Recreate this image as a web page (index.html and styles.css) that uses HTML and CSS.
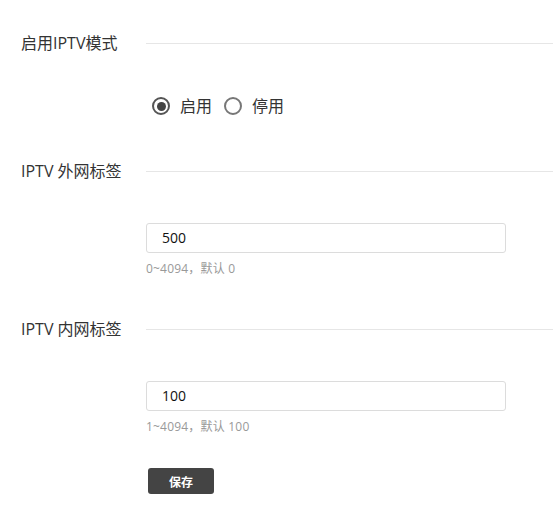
FILE: index.html
```html
<!DOCTYPE html>
<html lang="zh-CN">
<head>
<meta charset="utf-8">
<link rel="stylesheet" href="styles.css">
</head>
<body>
<div class="page">
  <section class="sec sec-first">
    <div class="head"><span class="title">启用IPTV模式</span><span class="rule"></span></div>
    <div class="body radios">
      <label class="radio"><span class="dot on"></span><span>启用</span></label>
      <label class="radio"><span class="dot"></span><span>停用</span></label>
    </div>
  </section>
  <section class="sec">
    <div class="head"><span class="title">IPTV 外网标签</span><span class="rule"></span></div>
    <div class="body field">
      <div class="input">500</div>
      <div class="hint">0~4094，默认 0</div>
    </div>
  </section>
  <section class="sec">
    <div class="head"><span class="title">IPTV 内网标签</span><span class="rule"></span></div>
    <div class="body field">
      <div class="input">100</div>
      <div class="hint">1~4094，默认 100</div>
      <button class="save">保存</button>
    </div>
  </section>
</div>
</body>
</html>
```
FILE: styles.css
```css
html, body { margin: 0; padding: 0; background: #fff; }
body {
  font-family: "Open Sans", "Noto Sans CJK SC", sans-serif;
  color: #333;
}
.page {
  padding-top: 32px;
  display: flex;
  flex-direction: column;
}
.sec { margin-top: 40px; }
.sec-first { margin-top: 0; padding-bottom: 3px; }
.head {
  display: flex;
  align-items: center;
  height: 22px;
  padding-left: 21px;
}
.title {
  width: 125px;
  flex: none;
  font-size: 16px;
  line-height: 22px;
  color: #333;
  white-space: nowrap;
}
.rule { flex: 1; height: 1px; background: #e6e6e6; }
.body { padding-left: 146px; }
.radios {
  margin-top: 41px;
  display: flex;
  align-items: center;
  height: 22px;
  padding-left: 152px;
  gap: 12px;
}
.radio {
  display: flex;
  align-items: center;
  gap: 10px;
  font-size: 16px;
  line-height: 22px;
  color: #333;
}
.dot {
  width: 14px;
  height: 14px;
  border: 2px solid #777;
  border-radius: 50%;
  display: flex;
  align-items: center;
  justify-content: center;
}
.dot.on { border-color: #555; }
.dot.on::after {
  content: "";
  width: 9px;
  height: 9px;
  border-radius: 50%;
  background: #444;
}
.field { margin-top: 41px; }
.input {
  box-sizing: border-box;
  width: 360px;
  height: 30px;
  border: 1px solid #dcdcdc;
  border-radius: 3px;
  padding-left: 15px;
  font-size: 14px;
  line-height: 28px;
  color: #111;
}
.hint {
  margin-top: 7px;
  font-size: 12px;
  line-height: 18px;
  color: #999;
  letter-spacing: 0.2px;
}
.save {
  display: block;
  margin-top: 32px;
  margin-left: 2px;
  width: 66px;
  height: 26px;
  border: 0;
  border-radius: 3px;
  background: #444;
  color: #fff;
  font-family: "Noto Sans CJK SC", sans-serif;
  font-size: 12px;
  font-weight: bold;
  padding: 0;
}
```
